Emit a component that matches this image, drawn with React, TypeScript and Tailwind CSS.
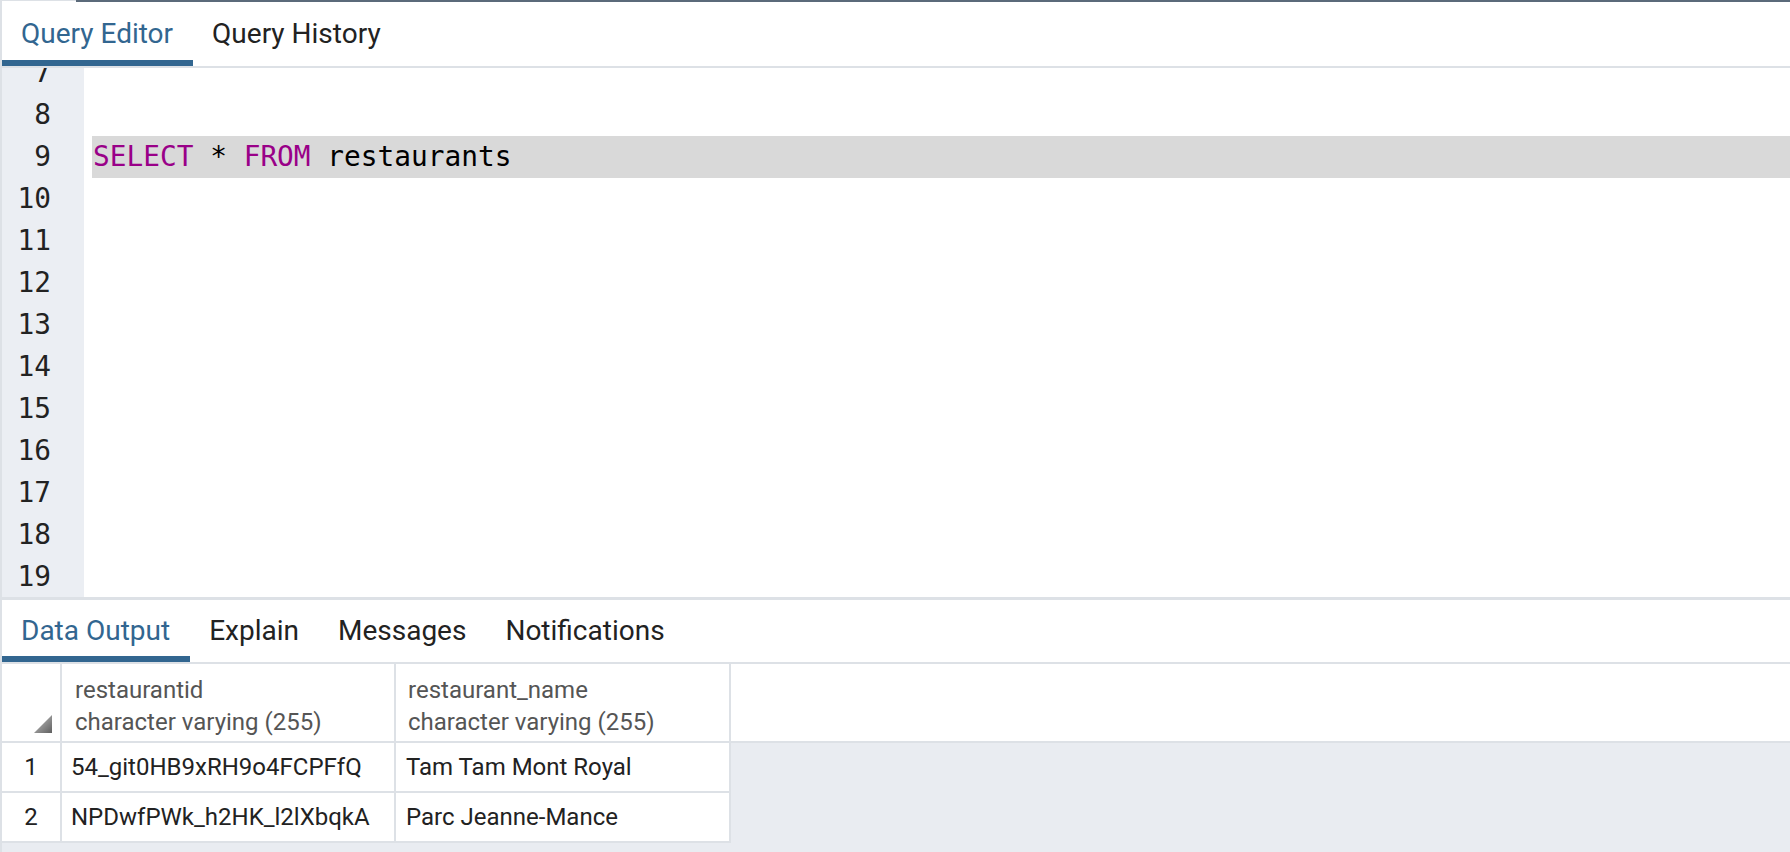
import React from 'react';

const lines = [7, 8, 9, 10, 11, 12, 13, 14, 15, 16, 17, 18, 19];

const rows = [
    { n: 1, id: '54_git0HB9xRH9o4FCPFfQ', name: 'Tam Tam Mont Royal' },
    { n: 2, id: 'NPDwfPWk_h2HK_l2lXbqkA', name: 'Parc Jeanne-Mance' },
];

function Tab({ label, active }: { label: string; active?: boolean }) {
    return (
        <div
            className={
                'h-full flex items-center pl-[19px] pr-[20px] pt-[5px] border-b-[6px] ' +
                (active ? 'border-[#326690] text-[#326690]' : 'border-transparent text-[#222222]')
            }
        >
            {label}
        </div>
    );
}

export default function App() {
    return (
        <div className="w-[1790px] h-[852px] bg-white flex flex-col overflow-hidden border-l-2 border-[#dde1e6] font-['Roboto',sans-serif]">
            {/* top strip */}
            <div className="flex h-[2px] shrink-0">
                <div className="w-[74px] border-t border-[#dde1e6]" />
                <div className="flex-1 bg-[#5b6a7a]" />
            </div>

            {/* editor tabs */}
            <div className="flex h-[66px] shrink-0 border-b-2 border-[#dde1e6] text-[28px]">
                <Tab label="Query Editor" active />
                <Tab label="Query History" />
            </div>

            {/* editor */}
            <div className="h-[532px] shrink-0 overflow-hidden border-b-[3px] border-[#dde1e6] font-['DejaVu_Sans_Mono',monospace] text-[27.8px]">
                <div className="-mt-[16px] flex flex-col">
                    {lines.map((n) => (
                        <div key={n} className="flex h-[42px] leading-[42px]">
                            <div className="w-[82px] shrink-0 bg-[#ebeef3] text-right pr-[33px] text-[#222222]">{n}</div>
                            <div className="w-[8px] shrink-0" />
                            <div className={'flex-1 pl-[1px] whitespace-pre ' + (n === 9 ? 'bg-[#d9d9d9]' : '')}>
                                {n === 9 && (
                                    <>
                                        <span className="text-[#990088]">SELECT</span>
                                        <span className="text-black"> * </span>
                                        <span className="text-[#990088]">FROM</span>
                                        <span className="text-black"> restaurants</span>
                                    </>
                                )}
                            </div>
                        </div>
                    ))}
                </div>
            </div>

            {/* output tabs */}
            <div className="flex h-[64px] shrink-0 border-b-2 border-[#dde1e6] text-[28px]">
                <Tab label="Data Output" active />
                <Tab label="Explain" />
                <Tab label="Messages" />
                <Tab label="Notifications" />
            </div>

            {/* result grid */}
            <div className="flex-1 flex flex-col bg-[#e9ecf1]">
                <div className="flex h-[79px] shrink-0 bg-white border-b-2 border-[#dde1e6]">
                    <div className="w-[60px] shrink-0 border-r-2 border-[#dde1e6] flex items-end justify-end pr-[8px] pb-[8px]">
                        <svg width="18" height="18" viewBox="0 0 18 18">
                            <defs>
                                <linearGradient id="tri" x1="0" y1="0" x2="1" y2="1">
                                    <stop offset="0" stopColor="#c8c8c8" />
                                    <stop offset="1" stopColor="#5f5f5f" />
                                </linearGradient>
                            </defs>
                            <polygon points="18,0 18,18 0,18" fill="url(#tri)" />
                        </svg>
                    </div>
                    <div className="w-[334px] shrink-0 border-r-2 border-[#dde1e6] pl-[13px] pt-[10px] text-[24px] leading-[32px] text-[#555555]">
                        <div>restaurantid</div>
                        <div>character varying (255)</div>
                    </div>
                    <div className="w-[335px] shrink-0 border-r-2 border-[#dde1e6] pl-[12px] pt-[10px] text-[24px] leading-[32px] text-[#555555]">
                        <div>restaurant_name</div>
                        <div>character varying (255)</div>
                    </div>
                    <div className="flex-1" />
                </div>
                {rows.map((r) => (
                    <div key={r.n} className="flex h-[50px] shrink-0 text-[24px] text-[#222222]">
                        <div className="w-[60px] shrink-0 bg-white border-r-2 border-b-2 border-[#dde1e6] flex items-center justify-center">{r.n}</div>
                        <div className="w-[334px] shrink-0 bg-white border-r-2 border-b-2 border-[#dde1e6] flex items-center pl-[9px]">{r.id}</div>
                        <div className="w-[335px] shrink-0 bg-white border-r-2 border-b-2 border-[#dde1e6] flex items-center pl-[10px]">{r.name}</div>
                    </div>
                ))}
            </div>
        </div>
    );
}
